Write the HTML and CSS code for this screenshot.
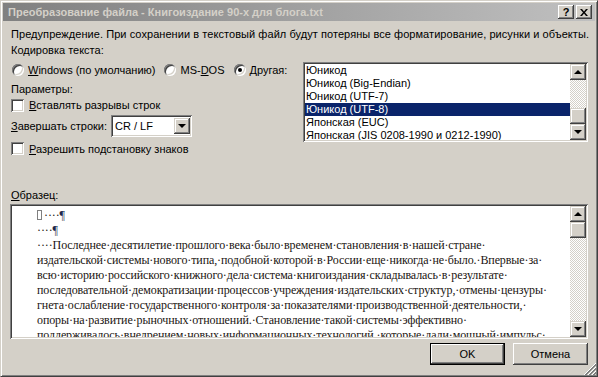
FILE: index.html
```html
<!DOCTYPE html>
<html lang="ru">
<head>
  <meta charset="UTF-8">
  <title>Преобразование файла</title>
  <link rel="stylesheet" href="styles.css">
</head>
<body>
  <div class="window">
    <div class="titlebar">
      <span class="title">Преобразование файла - Книгоиздание 90-х для блога.txt</span>
      <div class="caption-btns">
        <div class="cap-btn help">?</div>
        <div class="cap-btn">
          <svg width="8" height="7" viewBox="0 0 8 7"><path d="M0 0h2l2 2.5 2-2.5h2L5 3.5 8 7H6L4 4.5 2 7H0l3-3.5z" fill="#000"/></svg>
        </div>
      </div>
    </div>

    <div class="content">
      <div class="line warn">Предупреждение. При сохранении в текстовый файл будут потеряны все форматирование, рисунки и объекты.</div>
      <div class="line label-enc">Кодировка текста:</div>

      <div class="options">
        <div class="left-col">
          <div class="radios">
            <div class="radio-item"><span class="radio"></span><span><u>W</u>indows (по умолчанию)</span></div>
            <div class="radio-item"><span class="radio"></span><span>MS-<u>D</u>OS</span></div>
            <div class="radio-item"><span class="radio checked"></span><span><u>Д</u>ругая:</span></div>
          </div>
          <div class="line params">Параметры:</div>
          <div class="check-item"><span class="checkbox"></span><span><u>В</u>ставлять разрывы строк</span></div>
          <div class="eol-row">
            <span><u>З</u>авершать строки:</span>
            <div class="combo">
              <span class="combo-value">CR / LF</span>
              <div class="sb-btn combo-btn"><span class="arrow-down"></span></div>
            </div>
          </div>
          <div class="check-item"><span class="checkbox"></span><span><u>Р</u>азрешить подстановку знаков</span></div>
        </div>

        <div class="listbox">
          <div class="list-items">
            <div class="list-item">Юникод</div>
            <div class="list-item">Юникод (Big-Endian)</div>
            <div class="list-item">Юникод (UTF-7)</div>
            <div class="list-item selected">Юникод (UTF-8)</div>
            <div class="list-item">Японская (EUC)</div>
            <div class="list-item">Японская (JIS 0208-1990 и 0212-1990)</div>
          </div>
          <div class="scrollbar">
            <div class="sb-btn"><span class="arrow-up"></span></div>
            <div class="sb-track thumb-end"><div class="sb-thumb"></div></div>
            <div class="sb-btn"><span class="arrow-down"></span></div>
          </div>
        </div>
      </div>

      <div class="line sample-label"><u>О</u>бразец:</div>

      <div class="preview">
        <div class="preview-text">
          <div class="pline"><span class="obj-box"></span>····<span class="para">¶</span></div>
          <div class="pline">····<span class="para">¶</span></div>
          <div class="pline">····Последнее·десятилетие·прошлого·века·было·временем·становления·в·нашей·стране·</div>
          <div class="pline">издательской·системы·нового·типа,·подобной·которой·в·России·еще·никогда·не·было.·Впервые·за·</div>
          <div class="pline">всю·историю·российского·книжного·дела·система·книгоиздания·складывалась·в·результате·</div>
          <div class="pline">последовательной·демократизации·процессов·учреждения·издательских·структур,·отмены·цензуры·</div>
          <div class="pline">гнета·ослабление·государственного·контроля·за·показателями·производственной·деятельности,·</div>
          <div class="pline">опоры·на·развитие·рыночных·отношений.·Становление·такой·системы·эффективно·</div>
          <div class="pline">поддерживалось·внедрением·новых·информационных·технологий,·которые·дали·мощный·импульс·</div>
        </div>
        <div class="scrollbar">
          <div class="sb-btn"><span class="arrow-up"></span></div>
          <div class="sb-track"><div class="sb-thumb"></div></div>
          <div class="sb-btn"><span class="arrow-down"></span></div>
        </div>
      </div>

      <div class="buttons">
        <div class="btn default"><span>OK</span></div>
        <div class="btn"><span>Отмена</span></div>
      </div>
    </div>

    <svg class="gripper" width="12" height="12" viewBox="0 0 12 12" shape-rendering="crispEdges">
      <path d="M12 0L0 12" stroke="#fff"/>
      <path d="M12 1L1 12M12 2L2 12" stroke="#808080"/>
      <path d="M12 4L4 12" stroke="#fff"/>
      <path d="M12 5L5 12M12 6L6 12" stroke="#808080"/>
      <path d="M12 8L8 12" stroke="#fff"/>
      <path d="M12 9L9 12M12 10L10 12" stroke="#808080"/>
    </svg>
  </div>
</body>
</html>
```

FILE: styles.css
```css
body {
  margin: 0;
  background: #d4d0c8;
  font-family: "Liberation Sans", Arial, sans-serif;
  font-size: 11px;
  color: #000;
}

u {
  text-decoration: underline;
  text-underline-offset: 1px;
}

.window {
  position: relative;
  width: 598px;
  height: 377px;
  box-sizing: border-box;
  background: #d4d0c8;
  border: 1px solid;
  border-color: #d4d0c8 #404040 #404040 #d4d0c8;
  box-shadow: inset 1px 1px #fff, inset -1px -1px #808080;
  padding: 2px;
}

/* title bar */
.titlebar {
  height: 18px;
  display: flex;
  align-items: center;
  justify-content: space-between;
  padding: 0 3px 0 5px;
  background: linear-gradient(to right, #808080, #c0c0c0);
}

.title {
  color: #d4d0c8;
  font-weight: bold;
  font-size: 11px;
  white-space: nowrap;
}

.caption-btns {
  display: flex;
  gap: 2px;
}

.cap-btn {
  width: 16px;
  height: 14px;
  box-sizing: border-box;
  display: flex;
  align-items: center;
  justify-content: center;
  background: #d4d0c8;
  box-shadow: inset -1px -1px #404040, inset 1px 1px #fff, inset -2px -2px #808080;
}

.cap-btn.help {
  font-weight: bold;
  font-size: 11px;
  line-height: 14px;
}

/* dialog body */
.content {
  padding: 0 7px;
}

.line {
  height: 13px;
  line-height: 13px;
  white-space: nowrap;
  padding-left: 1px;
}

.warn {
  margin-top: 7px;
  letter-spacing: 0.06px;
}

.label-enc {
  margin-top: 3px;
}

.options {
  display: flex;
  justify-content: space-between;
  margin-top: 5px;
  height: 94px;
}

.left-col {
  display: flex;
  flex-direction: column;
  min-width: 0;
}

.radios {
  display: flex;
  height: 17px;
  align-items: center;
  padding-left: 2px;
}

.radio-item {
  display: flex;
  align-items: center;
  gap: 4px;
  margin-right: 9px;
  white-space: nowrap;
}

.radio {
  position: relative;
  width: 12px;
  height: 12px;
  border-radius: 50%;
  background: #fff;
  box-shadow: inset 1px 1px #808080, inset -1px -1px #fff, inset 2px 2px #404040, inset -2px -2px #d4d0c8;
}

.radio.checked::after {
  content: "";
  position: absolute;
  left: 4px;
  top: 4px;
  width: 4px;
  height: 4px;
  border-radius: 50%;
  background: #000;
}

.params {
  margin-top: 4px;
}

.check-item {
  display: flex;
  align-items: center;
  gap: 5px;
  height: 15px;
  margin-top: 2px;
  padding-left: 1px;
  white-space: nowrap;
}

.checkbox {
  width: 13px;
  height: 13px;
  background: #fff;
  box-shadow: inset 1px 1px #808080, inset -1px -1px #fff, inset 2px 2px #404040, inset -2px -2px #d4d0c8;
}

.eol-row {
  display: flex;
  align-items: center;
  gap: 4px;
  height: 23px;
  margin-top: 2px;
  margin-bottom: 2px;
  padding-left: 1px;
  white-space: nowrap;
}

.combo {
  width: 81px;
  height: 22px;
  box-sizing: border-box;
  padding: 2px;
  display: flex;
  align-items: center;
  justify-content: space-between;
  background: #fff;
  box-shadow: inset 1px 1px #808080, inset -1px -1px #fff, inset 2px 2px #404040, inset -2px -2px #d4d0c8;
}

.combo-value {
  padding-left: 2px;
}

.combo-btn {
  height: 18px;
}

/* list box */
.listbox {
  flex-shrink: 0;
  width: 285px;
  height: 80px;
  box-sizing: border-box;
  padding: 2px;
  display: flex;
  background: #fff;
  box-shadow: inset 1px 1px #808080, inset -1px -1px #fff, inset 2px 2px #404040, inset -2px -2px #d4d0c8;
}

.list-items {
  flex: 1;
  overflow: hidden;
}

.list-item {
  height: 13px;
  line-height: 13px;
  padding-left: 1px;
  white-space: nowrap;
}

.list-item.selected {
  background: #0a246a;
  color: #fff;
}

/* scroll bars */
.scrollbar {
  width: 16px;
  display: flex;
  flex-direction: column;
}

.sb-btn {
  width: 16px;
  height: 16px;
  box-sizing: border-box;
  flex-shrink: 0;
  display: flex;
  align-items: center;
  justify-content: center;
  background: #d4d0c8;
  box-shadow: inset -1px -1px #404040, inset 1px 1px #d4d0c8, inset -2px -2px #808080, inset 2px 2px #fff;
}

.sb-track {
  flex: 1;
  display: flex;
  flex-direction: column;
  background: repeating-conic-gradient(#fff 0 25%, #d4d0c8 0 50%) 0 0 / 2px 2px;
}

.sb-track.thumb-end {
  justify-content: flex-end;
}

.sb-thumb {
  height: 16px;
  background: #d4d0c8;
  box-shadow: inset -1px -1px #404040, inset 1px 1px #d4d0c8, inset -2px -2px #808080, inset 2px 2px #fff;
}

.arrow-up,
.arrow-down {
  width: 0;
  height: 0;
  border-left: 4px solid transparent;
  border-right: 4px solid transparent;
}

.arrow-up {
  border-bottom: 4px solid #000;
}

.arrow-down {
  border-top: 4px solid #000;
}

/* sample */
.sample-label {
  margin-top: 33px;
}

.preview {
  margin-top: 2px;
  height: 135px;
  box-sizing: border-box;
  padding: 2px;
  display: flex;
  background: #fff;
  box-shadow: inset 1px 1px #808080, inset -1px -1px #fff, inset 2px 2px #404040, inset -2px -2px #d4d0c8;
}

.preview-text {
  flex: 1;
  overflow: hidden;
  padding: 2px 0 0 25px;
  font-family: "Liberation Serif", "Times New Roman", serif;
  font-size: 12px;
  letter-spacing: -0.1px;
  color: #1a1410;
}

.pline {
  height: 15px;
  line-height: 15px;
  white-space: nowrap;
}

.obj-box {
  display: inline-block;
  width: 3px;
  height: 8px;
  border: 1px solid #808080;
  margin-right: 2px;
  vertical-align: -1px;
}

.para {
  color: #20284a;
}

/* buttons */
.buttons {
  display: flex;
  justify-content: flex-end;
  gap: 8px;
  margin-top: 4px;
}

.btn {
  width: 75px;
  height: 22px;
  box-sizing: border-box;
  display: flex;
  align-items: center;
  justify-content: center;
  background: #d4d0c8;
  box-shadow: inset -1px -1px #404040, inset 1px 1px #fff, inset -2px -2px #808080;
}

.btn.default {
  border: 1px solid #000;
}

.gripper {
  position: absolute;
  right: 1px;
  bottom: 1px;
}
```
